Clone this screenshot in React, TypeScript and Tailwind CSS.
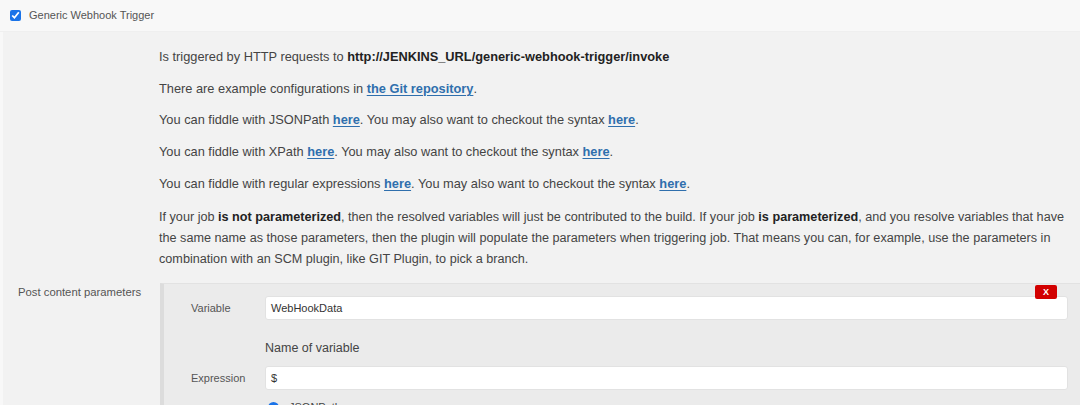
import React from "react";

const A = ({ children }: { children: React.ReactNode }) => (
  <a href="#" className="font-bold text-[#2f6fad] underline decoration-1 underline-offset-2">
    {children}
  </a>
);

const Field = ({ label, value }: { label: string; value: string }) => (
  <div className="flex items-center">
    <span className="w-[74px] shrink-0 text-[11px] text-[#555]">{label}</span>
    <div className="flex h-[24px] flex-1 items-center rounded-[3px] border border-[#e2e2e2] bg-white px-[5px] text-[11px] text-[#333]">
      {value}
    </div>
  </div>
);

export default function App() {
  return (
    <div className="h-[405px] w-[1080px] overflow-hidden bg-[#f2f2f2] font-['Liberation_Sans',Arial,sans-serif] text-[#444]">
      <div className="flex h-[32px] items-center gap-[8px] border-b border-[#efefef] bg-[#f8f8f8] pl-[10px]">
        <input type="checkbox" checked readOnly className="h-[11px] w-[11px] accent-[#1a73e8]" />
        <span className="text-[11px] text-[#555]">Generic Webhook Trigger</span>
      </div>

      <div className="border-l-[3px] border-[#f8f8f8]">
        <div className="flex flex-col gap-[12.7px] pt-[15px] pl-[156px] text-[12.8px] leading-[19px]">
          <p>
            Is triggered by HTTP requests to{" "}
            <b className="text-[#222]">http://JENKINS_URL/generic-webhook-trigger/invoke</b>
          </p>
          <p>
            There are example configurations in <A>the Git repository</A>.
          </p>
          <p>
            You can fiddle with JSONPath <A>here</A>. You may also want to checkout the syntax <A>here</A>.
          </p>
          <p>
            You can fiddle with XPath <A>here</A>. You may also want to checkout the syntax <A>here</A>.
          </p>
          <p>
            You can fiddle with regular expressions <A>here</A>. You may also want to checkout the syntax{" "}
            <A>here</A>.
          </p>
          <p className="mt-[2px] whitespace-nowrap text-[12.65px] leading-[21px]">
            If your job <b className="text-[#222]">is not parameterized</b>, then the resolved variables will just be
            contributed to the build. If your job <b className="text-[#222]">is parameterized</b>, and you resolve
            variables that have
            <br />
            the same name as those parameters, then the plugin will populate the parameters when triggering job. That
            means you can, for example, use the parameters in
            <br />
            combination with an SCM plugin, like GIT Plugin, to pick a branch.
          </p>
        </div>

        <div className="mt-[13px] flex">
          <div className="w-[157px] shrink-0 pt-[1px] pl-[15px] text-[11.3px] text-[#555]">Post content parameters</div>
          <div className="relative flex-1 border-t border-l-[4px] border-t-[#e2e2e2] border-l-[#dcdcdc] bg-[#ebebeb] pt-[12px] pl-[27px] pr-[12px]">
            <button className="absolute top-[1px] right-[23px] flex h-[14px] w-[22px] items-center justify-center rounded-[2px] bg-[#d20000] text-[9px] font-bold text-white">
              X
            </button>
            <Field label="Variable" value="WebHookData" />
            <div className="pt-[19px] pb-[8px] pl-[74px] text-[12.5px] text-[#444]">Name of variable</div>
            <Field label="Expression" value="$" />
            <div className="flex items-center gap-[10px] pt-[9px] pl-[77px] text-[11px]">
              <span className="h-[11px] w-[11px] rounded-full border-[3px] border-[#1a73e8] bg-white" />
              <span>JSONPath</span>
            </div>
          </div>
        </div>
      </div>
    </div>
  );
}
